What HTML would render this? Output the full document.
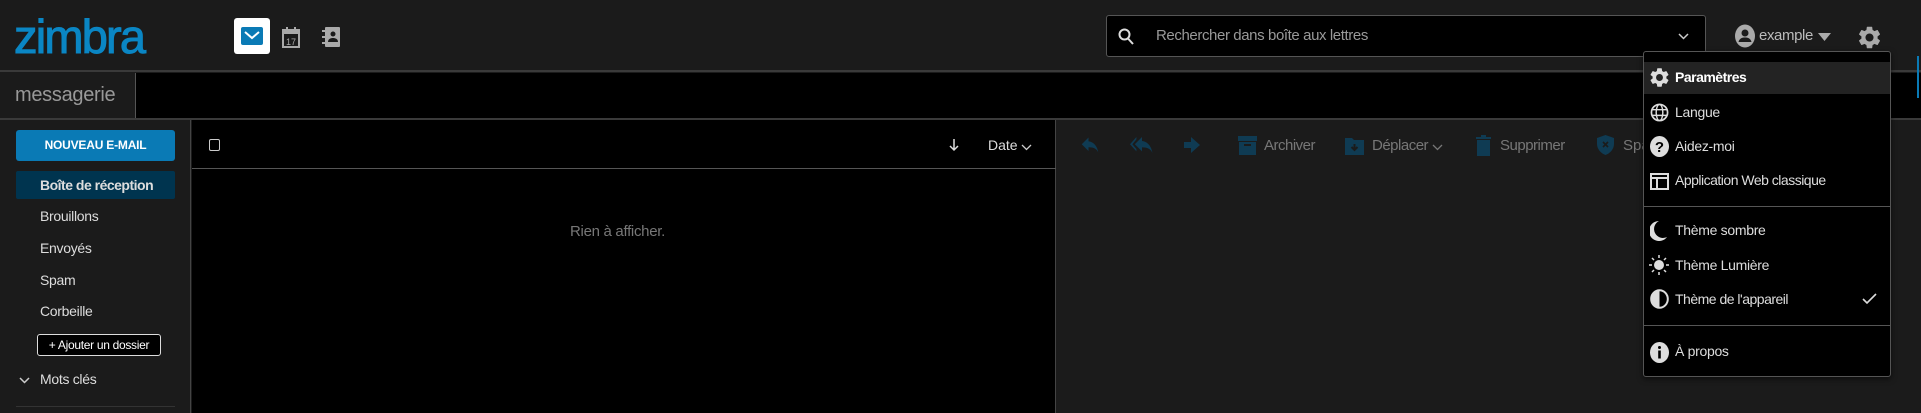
<!DOCTYPE html>
<html><head><meta charset="utf-8"><style>
*{box-sizing:border-box;margin:0;padding:0}
body{width:1921px;height:413px;overflow:hidden;background:#1b1b1b;font-family:"Liberation Sans",sans-serif;color:#ddd;position:relative;font-size:14px}
.a{position:absolute}
.t{white-space:nowrap}
svg{display:block}
</style></head><body>
<!-- header -->
<div class="a" style="left:0;top:0;width:1921px;height:72px;background:#1b1b1b;border-bottom:2px solid #3a3a3a"></div>
<div class="a t" style="left:14px;top:9px;font-size:47px;color:#0a86c4;letter-spacing:-1.8px;-webkit-text-stroke:1px #0a86c4">zimbra</div>
<div class="a" style="left:234px;top:18px;width:36px;height:36px;background:#fff;border-radius:3px"></div>
<svg class="a" style="left:241px;top:27px" width="22" height="18" viewBox="0 0 22 18"><rect width="22" height="18" rx="2" fill="#0a7ab5"/><path d="M4 5l7 6 7-6" stroke="#fff" stroke-width="2" fill="none"/></svg>
<svg class="a" style="left:282px;top:27px" width="18" height="21" viewBox="0 0 18 21"><rect x="1" y="3" width="16" height="17" fill="none" stroke="#aaa" stroke-width="2"/><rect x="1" y="3" width="16" height="4" fill="#aaa"/><rect x="4" y="0" width="2" height="4" fill="#aaa"/><rect x="12" y="0" width="2" height="4" fill="#aaa"/><text x="9" y="18" font-size="9" fill="#aaa" text-anchor="middle" font-family="Liberation Sans">17</text></svg>
<svg class="a" style="left:322px;top:27px" width="18" height="20" viewBox="0 0 18 20"><rect x="3" y="0" width="15" height="20" rx="1" fill="#aaa"/><rect x="0" y="3" width="4" height="2" fill="#aaa"/><rect x="0" y="9" width="4" height="2" fill="#aaa"/><rect x="0" y="15" width="4" height="2" fill="#aaa"/><circle cx="11" cy="7" r="2.5" fill="#1b1b1b"/><path d="M6 15c0-3 2.5-4 5-4s5 1 5 4z" fill="#1b1b1b"/></svg>
<!-- search -->
<div class="a" style="left:1106px;top:15px;width:600px;height:42px;background:#000;border:1px solid #555;border-radius:3px"></div>
<svg class="a" style="left:1118px;top:28px" width="16" height="17" viewBox="0 0 16 17"><circle cx="6.5" cy="6.5" r="5" stroke="#ddd" stroke-width="2" fill="none"/><path d="M10 10.5l5 5.5" stroke="#ddd" stroke-width="2"/></svg>
<div class="a t" style="left:1156px;top:27px;font-size:15px;color:#999;letter-spacing:-0.4px">Rechercher dans boîte aux lettres</div>
<svg class="a" style="left:1678px;top:33px" width="11" height="7"><path d="M1 1l4.5 4.5L10 1" stroke="#ccc" stroke-width="1.5" fill="none"/></svg>
<svg class="a" style="left:1734px;top:24px" width="22" height="24" viewBox="0 0 22 24"><ellipse cx="11" cy="12" rx="10" ry="11.5" fill="#aaa"/><circle cx="11" cy="9" r="3.5" fill="#1b1b1b"/><path d="M4.5 18c1-4 4-4.5 6.5-4.5s5.5.5 6.5 4.5z" fill="#1b1b1b"/></svg>
<div class="a t" style="left:1759px;top:27px;font-size:15px;color:#bbb;letter-spacing:-0.4px">example</div>
<svg class="a" style="left:1818px;top:33px" width="13" height="8"><path d="M0 0h13L6.5 8z" fill="#aaa"/></svg>
<svg class="a" style="left:1856px;top:24px" width="27" height="27" viewBox="0 0 24 24"><path fill="#aaa" d="M19.14 12.94c.04-.3.06-.61.06-.94 0-.32-.02-.64-.07-.94l2.03-1.580a.49.49 0 0 0 .12-.61l-1.92-3.32a.49.49 0 0 0-.59-.22l-2.39.96a7 7 0 0 0-1.62-.94l-.36-2.54a.48.48 0 0 0-.48-.41h-3.84a.48.48 0 0 0-.47.41l-.36 2.54c-.59.24-1.130.57-1.62.94l-2.39-.96a.48.48 0 0 0-.59.22L2.74 8.87a.47.47 0 0 0 .12.61l2.03 1.58c-.05.3-.09.63-.09.94s.02.64.07.94l-2.03 1.58a.49.49 0 0 0-.12.61l1.92 3.32c.12.22.37.29.59.22l2.39-.96c.5.38 1.03.7 1.62.94l.36 2.54c.05.24.24.41.48.41h3.84c.24 0 .44-.17.47-.41l.36-2.54c.59-.24 1.13-.56 1.62-.94l2.39.96c.22.08.47 0 .59-.22l1.92-3.32c.12-.22.07-.47-.12-.61zM12 15.6A3.6 3.6 0 1 1 12 8.4a3.6 3.6 0 0 1 0 7.2z"/></svg>
<!-- second bar -->
<div class="a" style="left:0;top:73px;width:1921px;height:47px;background:#000;border-bottom:2px solid #3a3a3a"></div>
<div class="a" style="left:0;top:73px;width:136px;height:45px;background:#1b1b1b;border-right:1px solid #555"></div>
<div class="a t" style="left:15px;top:84px;font-size:20px;color:#999;letter-spacing:-0.3px">messagerie</div>
<!-- sidebar -->
<div class="a" style="left:0;top:120px;width:191px;height:293px;background:#1b1b1b;border-right:1px solid #444"></div>
<div class="a t" style="left:16px;top:130px;width:159px;height:31px;background:#0a7ab5;border-radius:3px;color:#fff;font-weight:bold;font-size:12px;text-align:center;line-height:31px;letter-spacing:-0.2px">NOUVEAU E-MAIL</div>
<div class="a" style="left:16px;top:171px;width:159px;height:28px;background:#00344f;border-radius:2px"></div>
<div class="a t" style="left:40px;top:177px;font-size:14px;font-weight:bold;color:#ddd;letter-spacing:-0.5px">Boîte de réception</div>
<div class="a t" style="left:40px;top:208px;font-size:14px;color:#ddd;letter-spacing:-0.3px">Brouillons</div>
<div class="a t" style="left:40px;top:240px;font-size:14px;color:#ddd;letter-spacing:-0.3px">Envoyés</div>
<div class="a t" style="left:40px;top:272px;font-size:14px;color:#ddd;letter-spacing:-0.3px">Spam</div>
<div class="a t" style="left:40px;top:303px;font-size:14px;color:#ddd;letter-spacing:-0.3px">Corbeille</div>
<div class="a t" style="left:37px;top:334px;width:124px;height:22px;background:#000;border:1px solid #ddd;border-radius:3px;font-size:12px;color:#fff;text-align:center;line-height:20px;letter-spacing:-0.3px">+ Ajouter un dossier</div>
<svg class="a" style="left:19px;top:377px" width="11" height="7"><path d="M1 1l4.5 4.5L10 1" stroke="#ccc" stroke-width="1.5" fill="none"/></svg>
<div class="a t" style="left:40px;top:371px;font-size:14px;color:#ddd;letter-spacing:-0.3px">Mots clés</div>
<div class="a" style="left:16px;top:406px;width:159px;height:1px;background:#333"></div>
<!-- list -->
<div class="a" style="left:192px;top:120px;width:864px;height:293px;background:#000;border-right:1px solid #444"></div>
<div class="a" style="left:192px;top:168px;width:864px;height:1px;background:#555"></div>
<div class="a" style="left:209px;top:139px;width:11px;height:12px;border:1px solid #ccc;border-radius:2px"></div>
<svg class="a" style="left:949px;top:138px" width="10" height="14"><path d="M5 1v11M1 8l4 4 4-4" stroke="#ddd" stroke-width="1.5" fill="none"/></svg>
<div class="a t" style="left:988px;top:137px;font-size:14px;color:#ddd">Date</div>
<svg class="a" style="left:1021px;top:144px" width="11" height="7"><path d="M1 1l4.5 4.5L10 1" stroke="#ccc" stroke-width="1.3" fill="none"/></svg>
<div class="a t" style="left:570px;top:223px;font-size:15px;color:#777;letter-spacing:-0.3px">Rien à afficher.</div>
<!-- toolbar -->
<svg class="a" style="left:1081px;top:137px" width="18" height="16" viewBox="0 0 24 20"><path d="M10 5V0L1 9l9 9v-5c7 0 11 2 13 7-1-7-5-14-13-15z" fill="#0f3b53"/></svg>
<svg class="a" style="left:1130px;top:137px" width="24" height="16" viewBox="0 0 30 20"><path d="M8 3V0L0 9l8 9v-3L3 9z M15 5V0L6 9l9 9v-5c7 0 11 2 13 7-1-7-5-14-13-15z" fill="#0f3b53"/></svg>
<svg class="a" style="left:1184px;top:137px" width="16" height="16" viewBox="0 0 16 16"><path d="M0 5h7V0l9 8-9 8v-5H0z" fill="#0f3b53"/></svg>
<svg class="a" style="left:1238px;top:136px" width="19" height="19" viewBox="0 0 19 19"><rect x="0" y="0" width="19" height="5" fill="#0f3b53"/><path d="M1 6h17v13H1z" fill="#0f3b53"/><rect x="6" y="8" width="7" height="2" fill="#1b1b1b"/></svg>
<div class="a t" style="left:1264px;top:137px;font-size:15px;color:#777;letter-spacing:-0.5px">Archiver</div>
<svg class="a" style="left:1345px;top:136px" width="19" height="19" viewBox="0 0 19 19"><path d="M0 2h7l2 2h10v15H0z" fill="#0f3b53"/><path d="M9.5 8v6M6.5 11l3 3 3-3" stroke="#1b1b1b" stroke-width="2" fill="none"/></svg>
<div class="a t" style="left:1372px;top:137px;font-size:15px;color:#777;letter-spacing:-0.5px">Déplacer</div>
<svg class="a" style="left:1432px;top:144px" width="11" height="7"><path d="M1 1l4.5 4.5L10 1" stroke="#777" stroke-width="1.3" fill="none"/></svg>
<svg class="a" style="left:1476px;top:135px" width="15" height="21" viewBox="0 0 15 21"><rect x="0" y="2" width="15" height="2" fill="#0f3b53"/><rect x="5" y="0" width="5" height="2" fill="#0f3b53"/><path d="M1 5h13v16H1z" fill="#0f3b53"/></svg>
<div class="a t" style="left:1500px;top:137px;font-size:15px;color:#777;letter-spacing:-0.5px">Supprimer</div>
<svg class="a" style="left:1597px;top:135px" width="17" height="20" viewBox="0 0 17 20"><path d="M8.5 0L0 3v6c0 5 4 9.5 8.5 11 4.5-1.5 8.5-6 8.5-11V3z" fill="#0f3b53"/><path d="M6 7l5 5M11 7l-5 5" stroke="#1b1b1b" stroke-width="1.6"/></svg>
<div class="a t" style="left:1623px;top:137px;font-size:15px;color:#777">Spam</div>
<div class="a" style="left:1917px;top:56px;width:2px;height:42px;background:#0a7ab5"></div>
<!-- menu -->
<div class="a" style="left:1643px;top:51px;width:248px;height:326px;background:#000;border:1px solid #555;border-radius:3px;box-shadow:0 2px 6px rgba(0,0,0,.6)"></div>
<div class="a" style="left:1644px;top:62px;width:246px;height:32px;background:#232323"></div>
<svg class="a" style="left:1648px;top:66px" width="23" height="23" viewBox="0 0 24 24"><path fill="#ddd" d="M19.14 12.94c.04-.3.06-.61.06-.94 0-.32-.02-.64-.07-.94l2.03-1.58a.49.49 0 0 0 .12-.61l-1.92-3.32a.49.49 0 0 0-.59-.22l-2.39.96a7 7 0 0 0-1.62-.94l-.36-2.54a.48.48 0 0 0-.48-.41h-3.84a.48.48 0 0 0-.47.41l-.36 2.54c-.59.24-1.13.57-1.62.94l-2.39-.96a.48.48 0 0 0-.59.22L2.74 8.87a.47.47 0 0 0 .12.61l2.03 1.58c-.05.3-.09.63-.09.94s.02.64.07.94l-2.03 1.58a.49.49 0 0 0-.12.61l1.92 3.32c.12.22.37.29.59.22l2.39-.96c.5.38 1.03.7 1.62.94l.36 2.54c.05.24.24.41.48.41h3.84c.24 0 .44-.17.47-.41l.36-2.54c.59-.24 1.13-.56 1.62-.94l2.39.96c.22.08.47 0 .59-.22l1.92-3.32c.12-.22.07-.47-.12-.61zM12 15.6A3.6 3.6 0 1 1 12 8.4a3.6 3.6 0 0 1 0 7.2z"/></svg>
<div class="a t" style="left:1675px;top:69px;font-size:14px;font-weight:bold;color:#fff;letter-spacing:-0.5px">Paramètres</div>
<svg class="a" style="left:1650px;top:103px" width="19" height="19" viewBox="0 0 20 20"><circle cx="10" cy="10" r="8.5" stroke="#ddd" stroke-width="1.8" fill="none"/><ellipse cx="10" cy="10" rx="3.5" ry="8.5" stroke="#ddd" stroke-width="1.5" fill="none"/><path d="M2 7h16M2 13h16" stroke="#ddd" stroke-width="1.5"/></svg>
<div class="a t" style="left:1675px;top:104px;font-size:14px;color:#ddd;letter-spacing:-0.3px">Langue</div>
<svg class="a" style="left:1650px;top:136px" width="19" height="21" viewBox="0 0 19 21"><ellipse cx="9.5" cy="10.5" rx="9.5" ry="10.5" fill="#ddd"/><text x="9.5" y="16" font-size="15" font-weight="bold" fill="#000" text-anchor="middle" font-family="Liberation Sans">?</text></svg>
<div class="a t" style="left:1675px;top:138px;font-size:14px;color:#ddd;letter-spacing:-0.3px">Aidez-moi</div>
<svg class="a" style="left:1650px;top:173px" width="19" height="17" viewBox="0 0 19 17"><rect x="1" y="1" width="17" height="15" stroke="#ddd" stroke-width="2" fill="none"/><path d="M1 5h17M7 5v11" stroke="#ddd" stroke-width="2"/></svg>
<div class="a t" style="left:1675px;top:172px;font-size:14px;color:#ddd;letter-spacing:-0.5px">Application Web classique</div>
<div class="a" style="left:1644px;top:206px;width:246px;height:1px;background:#555"></div>
<svg class="a" style="left:1650px;top:221px" width="17" height="20" viewBox="0 0 17 20"><path d="M9 0A10 10 0 1 0 17 16 8 8 0 0 1 9 0z" fill="#ddd"/></svg>
<div class="a t" style="left:1675px;top:222px;font-size:14px;color:#ddd;letter-spacing:-0.3px">Thème sombre</div>
<svg class="a" style="left:1649px;top:255px" width="20" height="20" viewBox="0 0 20 20"><circle cx="10" cy="10" r="5" fill="#ddd"/><path d="M10 0v3M10 17v3M0 10h3M17 10h3M3 3l2 2M15 15l2 2M17 3l-2 2M5 15l-2 2" stroke="#ddd" stroke-width="1.5"/></svg>
<div class="a t" style="left:1675px;top:257px;font-size:14px;color:#ddd;letter-spacing:-0.3px">Thème Lumière</div>
<svg class="a" style="left:1650px;top:289px" width="19" height="20" viewBox="0 0 19 20"><ellipse cx="9.5" cy="10" rx="8.3" ry="8.8" stroke="#ddd" stroke-width="2" fill="none"/><path d="M9.5 1.2a8.3 8.8 0 0 0 0 17.6z" fill="#ddd"/></svg>
<div class="a t" style="left:1675px;top:291px;font-size:14px;color:#ddd;letter-spacing:-0.5px">Thème de l'appareil</div>
<svg class="a" style="left:1862px;top:293px" width="15" height="12"><path d="M1 6l4 4 9-9" stroke="#ddd" stroke-width="1.6" fill="none"/></svg>
<div class="a" style="left:1644px;top:325px;width:246px;height:1px;background:#555"></div>
<svg class="a" style="left:1650px;top:342px" width="19" height="21" viewBox="0 0 19 21"><ellipse cx="9.5" cy="10.5" rx="9.5" ry="10.5" fill="#ddd"/><rect x="8.2" y="8.5" width="2.6" height="8" fill="#000"/><circle cx="9.5" cy="5.5" r="1.5" fill="#000"/></svg>
<div class="a t" style="left:1675px;top:343px;font-size:14px;color:#ddd;letter-spacing:-0.3px">À propos</div>
</body></html>
